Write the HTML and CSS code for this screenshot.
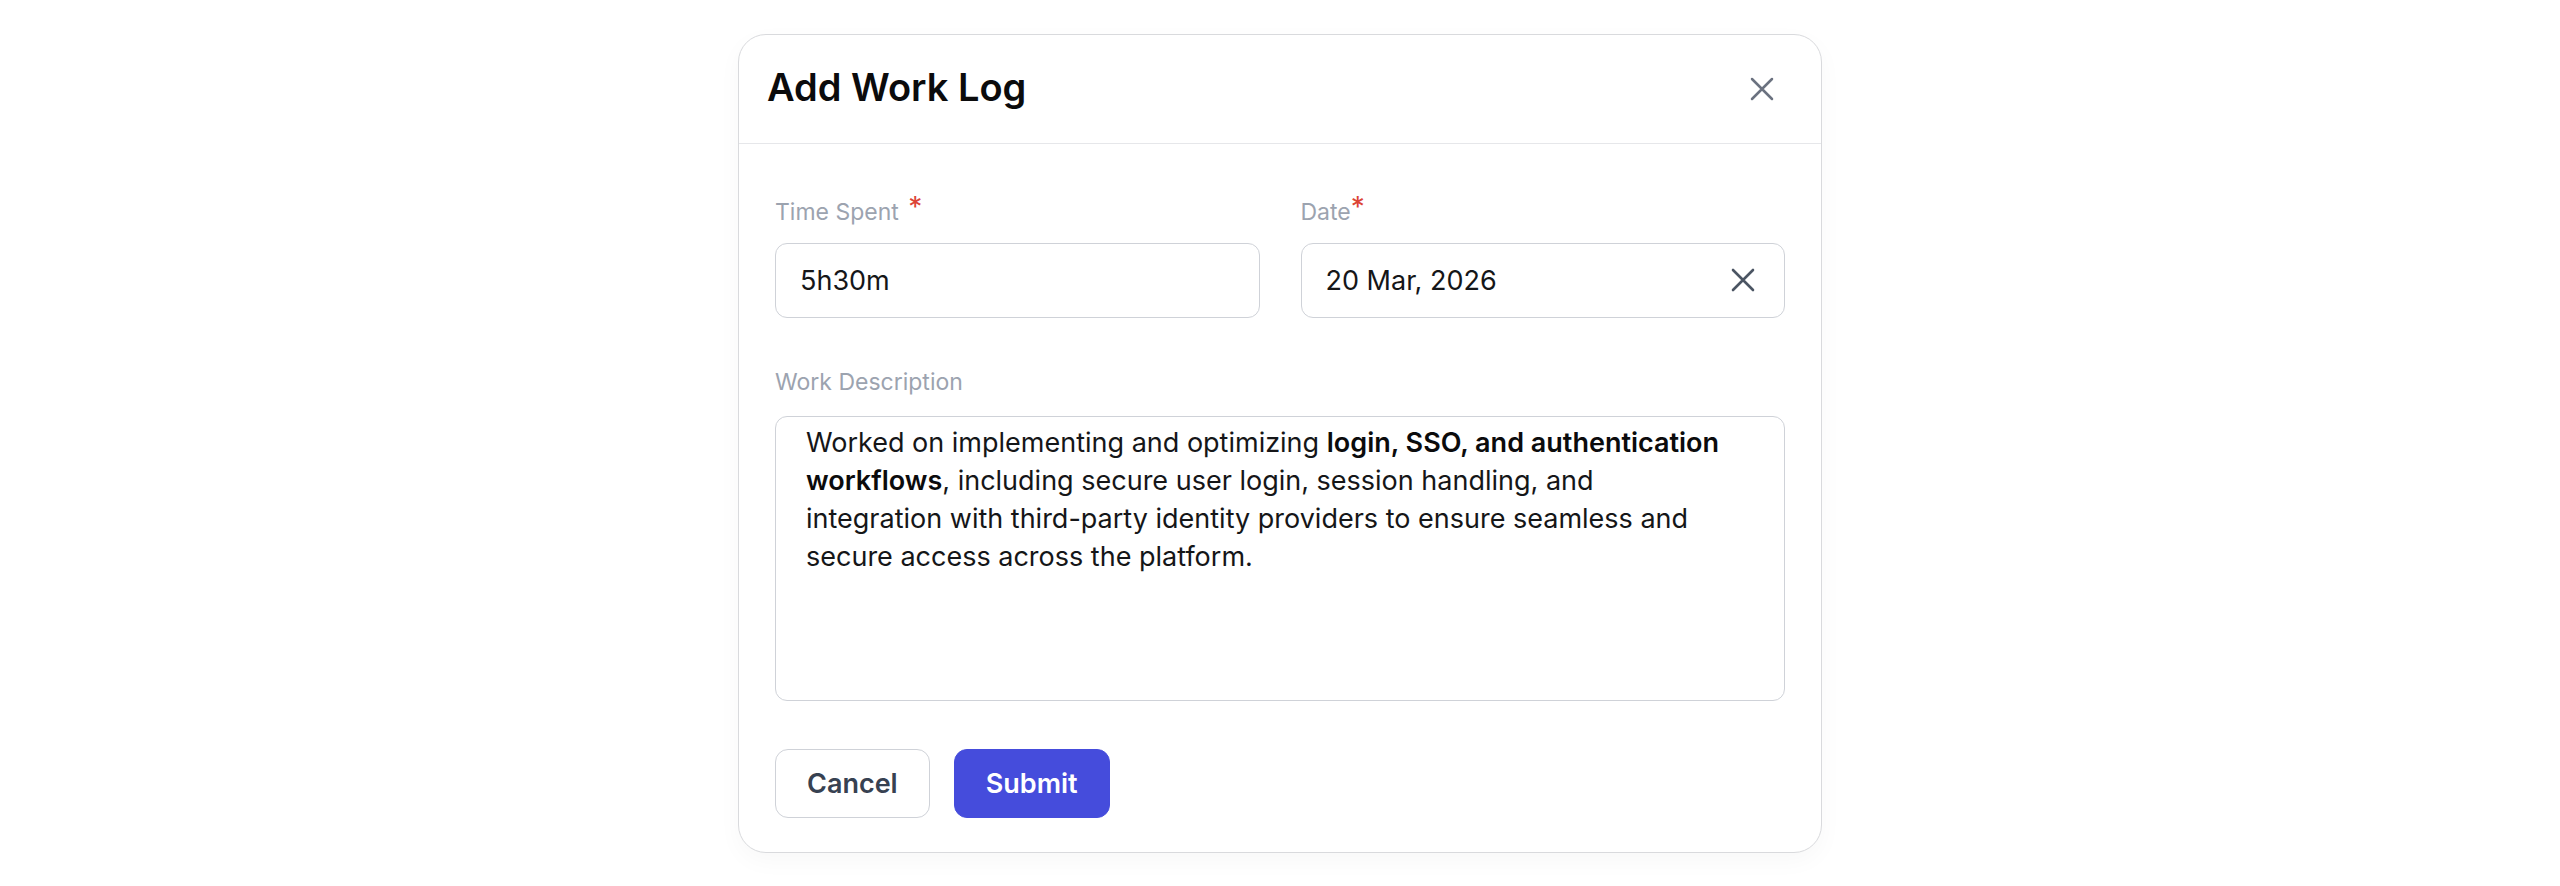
FILE: index.html
```html
<!DOCTYPE html>
<html lang="en">
<head>
    <meta charset="UTF-8">
    <meta name="viewport" content="width=device-width, initial-scale=1.0">
    <title>Add Work Log</title>
    <link rel="stylesheet" href="styles.css">
</head>
<body>
    <div class="modal">
        <div class="modal-header">
            <h2>Add Work Log</h2>
            <button class="close-btn" type="button" aria-label="Close">
                <svg width="24" height="24" viewBox="0 0 24 24"><path d="M2 2L22 22M22 2L2 22"/></svg>
            </button>
        </div>

        <form class="modal-body">
            <div class="field-row">
                <div class="field">
                    <label>Time Spent <span class="req req-spaced">*</span></label>
                    <input class="input" type="text" value="5h30m">
                </div>
                <div class="field">
                    <label>Date<span class="req">*</span></label>
                    <div class="input date-input">
                        <span>20 Mar, 2026</span>
                        <svg class="clear-icon" width="24" height="24" viewBox="0 0 24 24"><path d="M2 2L22 22M22 2L2 22"/></svg>
                    </div>
                </div>
            </div>

            <div class="field field-description">
                <label>Work Description</label>
                <div class="description" contenteditable="true">Worked on implementing and optimizing <strong>login, SSO, and authentication workflows</strong>, including secure user login, session handling, and integration with third-party identity providers to ensure seamless and secure access across the platform.</div>
            </div>

            <div class="actions">
                <button class="btn btn-cancel" type="button">Cancel</button>
                <button class="btn btn-submit" type="button">Submit</button>
            </div>
        </form>
    </div>
</body>
</html>
```

FILE: styles.css
```css
* {
    margin: 0;
    padding: 0;
    box-sizing: border-box;
}

body {
    font-family: Inter, 'Noto Sans', sans-serif;
    background-color: #fff;
    color: #111;
    height: 886px;
    display: flex;
    align-items: center;
    justify-content: center;
}

.modal {
    width: 1084px;
    background: #fff;
    border: 1px solid #d9dadd;
    border-radius: 28px;
    box-shadow: 0 8px 24px rgba(0, 0, 0, 0.03);
}

.modal-header {
    height: 109px;
    display: flex;
    align-items: center;
    justify-content: space-between;
    padding: 0 35px 4px 28px;
    border-bottom: 1px solid #e6e7ea;
}

.modal-header h2 {
    font-size: 38px;
    font-weight: 600;
    color: #0b0b0c;
}

.close-btn {
    width: 48px;
    height: 48px;
    border: none;
    background: none;
    display: flex;
    align-items: center;
    justify-content: center;
    cursor: pointer;
    margin-top: 4px;
}

.close-btn svg path {
    stroke: #6b7280;
    stroke-width: 2.5;
    stroke-linecap: round;
    fill: none;
}

.modal-body {
    padding: 52px 36px 34px;
}

.field-row {
    display: grid;
    grid-template-columns: 1fr 1fr;
    gap: 41px;
    margin-bottom: 48px;
}

.field label {
    display: block;
    font-size: 23px;
    line-height: 33px;
    height: 33px;
    color: #9ca3af;
    margin-bottom: 14px;
}

.field-description label {
    margin-bottom: 17px;
}

.req {
    color: #dc4436;
    font-size: 28px;
    line-height: 0;
    vertical-align: 3px;
}

.req-spaced {
    margin-left: 3px;
}

.input {
    width: 100%;
    height: 75px;
    border: 1px solid #cfd2d8;
    border-radius: 12px;
    padding: 0 29px 0 24px;
    font-family: inherit;
    font-size: 27px;
    color: #151618;
    background: #fff;
    outline: none;
}

.date-input {
    display: flex;
    align-items: center;
    justify-content: space-between;
}

.clear-icon path {
    stroke: #4b5563;
    stroke-width: 2.6;
    stroke-linecap: round;
    fill: none;
}

.description {
    height: 285px;
    border: 1px solid #cfd2d8;
    border-radius: 12px;
    padding: 7px 60px 0 30px;
    font-size: 27px;
    line-height: 38px;
    color: #151618;
    outline: none;
}

.description strong {
    font-weight: 600;
    color: #0b0b0c;
}

.actions {
    display: flex;
    gap: 24px;
    margin-top: 48px;
}

.btn {
    height: 69px;
    padding: 0 31px;
    border-radius: 13px;
    font-family: inherit;
    font-size: 27px;
    font-weight: 600;
    cursor: pointer;
}

.btn-cancel {
    background: #fff;
    color: #374151;
    border: 1px solid #cfd2d8;
}

.btn-submit {
    background: #454cdc;
    color: #fff;
    border: 1px solid #454cdc;
}
```
